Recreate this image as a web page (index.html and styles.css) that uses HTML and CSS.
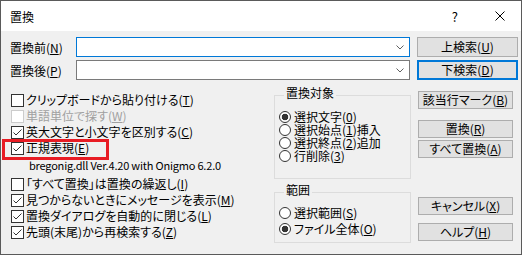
FILE: index.html
```html
<!DOCTYPE html>
<html lang="ja">
<head>
    <meta charset="UTF-8">
    <title>置換</title>
    <link rel="stylesheet" href="styles.css">
</head>
<body>
<div class="window">
    <div class="titlebar">
        <span class="title">置換</span>
        <span class="help">?</span>
        <svg class="close" width="10" height="10" viewBox="0 0 10 10"><path d="M0.5 0.5 L9.5 9.5 M9.5 0.5 L0.5 9.5" stroke="#000" stroke-width="1"/></svg>
    </div>

    <div class="content">
        <div class="field-row">
            <label class="field-label">置換前(<u>N</u>)</label>
            <div class="combo focus">
                <svg class="arrow" width="8" height="5" viewBox="0 0 8 5"><path d="M0.5 0.5 L4 4 L7.5 0.5" fill="none" stroke="#606060" stroke-width="1"/></svg>
            </div>
            <button class="btn btn-top">上検索(<u>U</u>)</button>
        </div>
        <div class="field-row second">
            <label class="field-label">置換後(<u>P</u>)</label>
            <div class="combo">
                <svg class="arrow" width="8" height="5" viewBox="0 0 8 5"><path d="M0.5 0.5 L4 4 L7.5 0.5" fill="none" stroke="#606060" stroke-width="1"/></svg>
            </div>
            <button class="btn btn-top default">下検索(<u>D</u>)</button>
        </div>

        <div class="lower">
            <div class="options">
                <div class="opt"><span class="check"></span>クリップボードから貼り付ける(<u>T</u>)</div>
                <div class="opt disabled"><span class="check"></span>単語単位で探す(<u>W</u>)</div>
                <div class="opt"><span class="check on"><svg width="11" height="11" viewBox="0 0 11 11"><path d="M1.5 5.5 L4 8 L9.5 2.5" fill="none" stroke="#333" stroke-width="1"/></svg></span>英大文字と小文字を区別する(<u>C</u>)</div>
                <div class="opt highlight"><span class="check on"><svg width="11" height="11" viewBox="0 0 11 11"><path d="M1.5 5.5 L4 8 L9.5 2.5" fill="none" stroke="#333" stroke-width="1"/></svg></span>正規表現(<u>E</u>)</div>
                <div class="version">bregonig.dll Ver.4.20 with Onigmo 6.2.0</div>
                <div class="opt"><span class="check"></span>「すべて置換」は置換の繰返し(<u>I</u>)</div>
                <div class="opt"><span class="check on"><svg width="11" height="11" viewBox="0 0 11 11"><path d="M1.5 5.5 L4 8 L9.5 2.5" fill="none" stroke="#333" stroke-width="1"/></svg></span>見つからないときにメッセージを表示(<u>M</u>)</div>
                <div class="opt"><span class="check on"><svg width="11" height="11" viewBox="0 0 11 11"><path d="M1.5 5.5 L4 8 L9.5 2.5" fill="none" stroke="#333" stroke-width="1"/></svg></span>置換ダイアログを自動的に閉じる(<u>L</u>)</div>
                <div class="opt"><span class="check on"><svg width="11" height="11" viewBox="0 0 11 11"><path d="M1.5 5.5 L4 8 L9.5 2.5" fill="none" stroke="#333" stroke-width="1"/></svg></span>先頭(末尾)から再検索する(<u>Z</u>)</div>
            </div>

            <div class="groups">
                <fieldset class="group target">
                    <legend>置換対象</legend>
                    <div class="radio-list">
                        <div class="rad"><span class="radio on"></span>選択文字(<u>0</u>)</div>
                        <div class="rad"><span class="radio"></span>選択始点(<u>1</u>)挿入</div>
                        <div class="rad"><span class="radio"></span>選択終点(<u>2</u>)追加</div>
                        <div class="rad"><span class="radio"></span>行削除(<u>3</u>)</div>
                    </div>
                </fieldset>
                <fieldset class="group range">
                    <legend>範囲</legend>
                    <div class="radio-list">
                        <div class="rad"><span class="radio"></span>選択範囲(<u>S</u>)</div>
                        <div class="rad"><span class="radio on"></span>ファイル全体(<u>O</u>)</div>
                    </div>
                </fieldset>
            </div>

            <div class="actions">
                <button class="btn mark">該当行マーク(<u>B</u>)</button>
                <button class="btn replace">置換(<u>R</u>)</button>
                <button class="btn all">すべて置換(<u>A</u>)</button>
                <button class="btn cancel">キャンセル(<u>X</u>)</button>
                <button class="btn help-btn">ヘルプ(<u>H</u>)</button>
            </div>
        </div>
    </div>
</div>
</body>
</html>
```

FILE: styles.css
```css
body { margin: 0; background: #fff; font: 12px "Noto Sans CJK JP", sans-serif; font-feature-settings: "palt"; color: #000; }
u { text-underline-offset: 1px; }

.window { width: 520px; height: 253px; border: 1px solid #5a5a5a; display: flex; flex-direction: column; }
.titlebar { height: 30px; flex: none; background: #fff; display: flex; align-items: center; padding-left: 9px; }
.title { flex: 1; }
.help { font-size: 13px; margin-right: 37px; }
.close { margin-right: 16px; }

.content { flex: 1; background: #f0f0f0; padding: 6px 3px 0 9px; }
.field-row { display: flex; align-items: center; height: 20px; }
.field-row.second { margin-top: 3px; }
.field-label { width: 66px; flex: none; }
.combo { width: 334px; height: 20px; box-sizing: border-box; border: 1px solid #7a7a7a; background: #fff; display: flex; align-items: center; justify-content: flex-end; padding-right: 5px; }
.combo.focus { border-color: #0078d7; }
.arrow { margin-top: 1px; }

.btn { font: inherit; font-feature-settings: "palt"; color: #000; background: #e1e1e1; border: 1px solid #adadad; padding: 0; height: 18px; width: 95px; box-sizing: border-box; display: block; line-height: 14px; }
.btn-top { width: 101px; height: 20px; margin-left: 7px; }
.btn.default { border: 2px solid #0078d7; }

.lower { display: flex; margin-top: 5px; }
.options { width: 264px; padding-top: 7px; }
.opt { display: flex; align-items: center; height: 16px; line-height: 16px; white-space: nowrap; }
.check { width: 13px; height: 13px; box-sizing: border-box; border: 1px solid #333; background: #fff; margin: 0 2px 0 1px; flex: none; display: flex; }
.opt.disabled { color: #a0a0a0; }
.opt.disabled .check { border-color: #cccccc; }
.highlight { position: relative; }
.highlight::after { content: ""; position: absolute; left: -8px; top: -1px; width: 107px; height: 21px; box-sizing: border-box; border: 3px solid #e81c24; }
.version { padding-left: 19px; font-size: 11px; letter-spacing: -0.2px; line-height: 18px; margin-bottom: 2px; white-space: nowrap; }

.groups { width: 137px; padding-top: 2px; }
.group { margin: 0; padding: 0 0 0 4px; border: 1px solid #dcdcdc; min-width: 0; }
.group legend { padding: 0 2px 4px; margin-left: 5px; line-height: 12px; }
.group.target { padding-bottom: 16px; }
.group.target .radio-list { padding-top: 7px; }
.group.target .rad { height: 13px; line-height: 13px; }
.group.range { margin-top: 5px; padding-bottom: 5px; }
.group.range .radio-list { padding-top: 5px; }
.group.range .rad { height: 16px; line-height: 16px; }
.rad { display: flex; align-items: center; white-space: nowrap; }
.radio { width: 12px; height: 12px; box-sizing: border-box; border: 1px solid #333; border-radius: 50%; background: #fff; margin-right: 3px; flex: none; }
.radio.on { background: radial-gradient(circle, #333 0 3px, #fff 3.6px); }

.actions { width: 95px; margin-left: 7px; }
.mark { margin-top: 6px; }
.replace { margin-top: 11px; }
.all { margin-top: 2px; }
.cancel { margin-top: 39px; }
.help-btn { margin-top: 8px; }
```
